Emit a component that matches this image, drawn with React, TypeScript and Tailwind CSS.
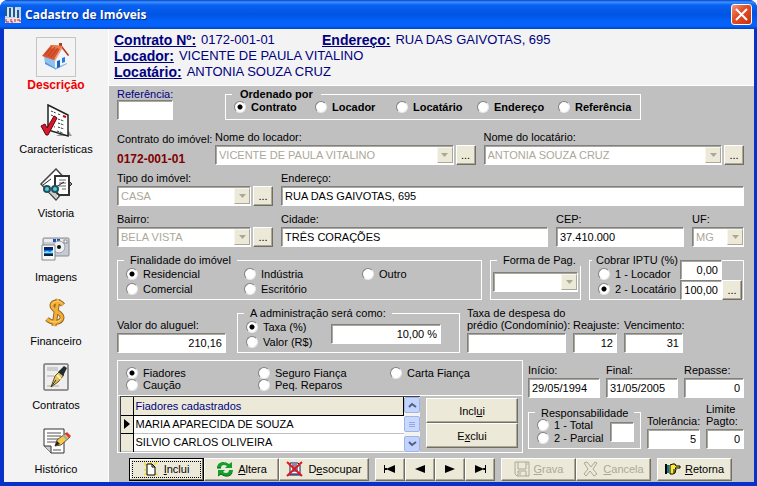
import React from "react";

const inputClass =
  "block h-5 w-full min-w-0 border border-t-[#808080] border-l-[#808080] border-r-white border-b-white bg-white px-[3px] text-black shadow-[inset_1px_1px_#aaa89c] outline-none";
const raised =
  "border border-t-white border-l-white border-r-[#716f64] border-b-[#716f64] bg-[#ece9d8] shadow-[inset_-1px_-1px_#aca899]";

type FieldProps = {
  id: string;
  label: React.ReactNode;
  value?: string;
  className?: string;
  labelClass?: string;
  right?: boolean;
};

function Field({ id, label, value = "", className = "", labelClass = "", right }: FieldProps) {
  return (
    <div className={`flex flex-col justify-end gap-0.5 ${className}`}>
      <label htmlFor={id} className={`whitespace-nowrap ${labelClass}`}>
        {label}
      </label>
      <input id={id} defaultValue={value} className={`${inputClass} ${right ? "text-right" : ""}`} />
    </div>
  );
}

function Combo({ id, value, label }: { id: string; value: string; label?: string }) {
  return (
    <div className="flex h-5 min-w-0 flex-1 border border-t-[#808080] border-l-[#808080] border-r-white border-b-white bg-white shadow-[inset_1px_1px_#aaa89c]">
      <select
        id={id}
        disabled
        aria-label={label}
        className="min-w-0 flex-1 appearance-none bg-transparent px-[3px] text-[#aca899] opacity-100 outline-none"
      >
        <option>{value}</option>
      </select>
      <span className="my-px flex w-4 shrink-0 items-center justify-center border border-t-[#f8f6ec] border-l-[#f8f6ec] border-r-[#aca899] border-b-[#aca899] bg-[#ece9d8]">
        <svg width="7" height="4" viewBox="0 0 7 4" fill="#aca899">
          <path d="M0 0h7L3.500 4z" />
        </svg>
      </span>
    </div>
  );
}

function MoreButton({ label }: { label: string }) {
  return (
    <button aria-label={label} className={`h-5 w-5 shrink-0 ${raised}`}>
      ...
    </button>
  );
}

type ComboFieldProps = { id: string; label: string; value: string; className?: string; more?: boolean };

function ComboField({ id, label, value, className = "", more = true }: ComboFieldProps) {
  return (
    <div className={`flex flex-col gap-0.5 ${className}`}>
      <label htmlFor={id}>{label}</label>
      <div className="flex gap-0.5">
        <Combo id={id} value={value} />
        {more && <MoreButton label={`Procurar ${label}`} />}
      </div>
    </div>
  );
}

function Radio({ name, label, checked }: { name: string; label: string; checked?: boolean }) {
  return (
    <label className="flex items-center gap-[5px] whitespace-nowrap">
      <input
        type="radio"
        name={name}
        defaultChecked={checked}
        className="h-3 w-3 shrink-0 appearance-none rounded-full border border-t-[#808080] border-l-[#808080] border-r-[#e8e8e8] border-b-[#e8e8e8] bg-white checked:bg-[radial-gradient(circle,#000_2px,#fff_3px)]"
      />
      {label}
    </label>
  );
}

type GroupProps = { legend: string; className?: string; legendClass?: string; children: React.ReactNode };

function Group({ legend, className = "", legendClass = "ml-1.5 px-1.5", children }: GroupProps) {
  return (
    <fieldset className={`min-w-0 border border-white ${className}`}>
      <legend className={`whitespace-nowrap ${legendClass}`}>{legend}</legend>
      {children}
    </fieldset>
  );
}

function HouseIcon() {
  return (
    <svg width="28" height="28" viewBox="0 0 28 28">
      <path d="M2 14l4-3 8 5v10L3 20z" fill="#8fc0ee" />
      <path d="M3 19l10 6v1L3 21z" fill="#4f93d8" />
      <path d="M13 15l7-10 5 7v9l-12 5z" fill="#eef6fd" />
      <path d="M13 25l12-5v1l-12 6z" fill="#86b6e4" />
      <path d="M15 18l3-1v7l-3 1z" fill="#1b63b8" />
      <path d="M20 15l3-1v5l-3 1z" fill="#2a7cd4" />
      <path d="M17 0h3v5h-3z" fill="#b8381a" />
      <path d="M0 13L9 2l11 1-8 14z" fill="#d9532c" />
      <path d="M9 2l11 1-2 3L7 5z" fill="#e97a4e" />
      <path d="M3 12l7-9M6 13l7-9M9 14l7-9" stroke="#bd3e1c" />
      <path d="M12 17l8-14 7 9-1 1-6-7-7 12z" fill="#f09a78" />
      <path d="M20 3l7 9-1 1-6-8z" fill="#b63314" />
    </svg>
  );
}

function CheckIcon() {
  return (
    <svg width="34" height="34" viewBox="0 0 34 34">
      <path d="M17 32l16 0-4-6z" fill="#999" />
      <path d="M9 1l20 10v21L9 26z" fill="#fff" stroke="#222" strokeWidth="1.500" />
      <path d="M12 7l5 2M12 11l5 2M19 10l3 1M19 15l6 2M19 19l6 2M19 23l6 2M12 22l4 1M18 27l6 2" stroke="#333" strokeDasharray="2 1" />
      <path d="M24 12l3 1" stroke="#c00" strokeWidth="2" />
      <path d="M2 22l4-2 2 4 7-12 3 2-9 17H7z" fill="#d51a2c" stroke="#650010" />
    </svg>
  );
}

function VistoriaIcon() {
  return (
    <svg width="34" height="34" viewBox="0 0 34 34">
      <path d="M17 1L2 16l15 16 14-16z" fill="#fff" stroke="#444" strokeWidth="1.500" />
      <path d="M4 19h14v12z" fill="#ccc" />
      <path d="M16 8h14v19H20l-4-4z" fill="#fff" stroke="#333" strokeWidth="2" />
      <path d="M20 12h7M20 15h7M20 18h7M23 21h4" stroke="#666" />
      <path d="M4 17l8-6M17 19l8-5" stroke="#222" fill="none" />
      <circle cx="8" cy="21" r="3" fill="#54cddd" stroke="#24515b" strokeWidth="2" />
      <circle cx="16" cy="21" r="3" fill="#54cddd" stroke="#24515b" strokeWidth="2" />
      <path d="M31 14l2 2-2 2" fill="none" stroke="#333" />
    </svg>
  );
}

function CameraIcon() {
  return (
    <svg width="32" height="32" viewBox="0 0 32 32">
      <rect x="3" y="5" width="26" height="18" rx="1" fill="#c8ccd2" stroke="#878c94" />
      <path d="M4 6h24v3H4z" fill="#e8ebef" />
      <path d="M13 6h3v3h-3zM17 6h3v3h-3z" fill="#264e9d" />
      <circle cx="19" cy="14" r="6" fill="#edf0f2" stroke="#999fa7" />
      <circle cx="19" cy="14" r="2" fill="#111" />
      <rect x="24" y="7" width="3" height="3" fill="#fff" stroke="#888" />
      <path d="M2 12h13v15H2z" fill="#f8f8f8" stroke="#888" />
      <path d="M4 14h9v9H4z" fill="#0870d8" />
      <path d="M4 14h9v3H4z" fill="#05246d" />
      <path d="M4 19l3-1 3 1 3-2v3H4z" fill="#8ce0ff" />
      <path d="M4 21h9v2H4z" fill="#102035" />
    </svg>
  );
}

function DollarIcon() {
  return (
    <svg width="32" height="34" viewBox="0 0 32 34" fill="none" strokeLinejoin="round">
      <path d="M23 9c-3-4-10-4-11 0-1 6 11 7 10 13-1 5-10 6-15 1M18 3l-4 27" stroke="#8e6827" strokeWidth="5" />
      <path d="M23 9c-3-4-10-4-11 0-1 6 11 7 10 13-1 5-10 6-15 1M18 3l-4 27" stroke="#f6ae35" strokeWidth="3" />
      <path d="M22 7c-3-3-9-2-10 2M10 25c4 2 9 1 11-2" stroke="#ffd37a" />
    </svg>
  );
}

function ContractIcon() {
  return (
    <svg width="32" height="32" viewBox="0 0 32 32">
      <rect x="4" y="3" width="24" height="26" rx="1" fill="#eee" stroke="#777" strokeWidth="1.500" />
      <path d="M7 7h11M7 9h11M7 15h7M7 25h12" stroke="#aaa" />
      <path d="M11 26l4-11 5-5 4 4-6 7z" fill="#e4c262" stroke="#665220" />
      <path d="M18 11l6-6 3 2-4 8z" fill="#202b34" />
      <path d="M11 26l5-7" stroke="#332" />
      <path d="M17 14l4 4" stroke="#fff2ad" strokeWidth="2" />
    </svg>
  );
}

function HistoryIcon() {
  return (
    <svg width="32" height="32" viewBox="0 0 32 32">
      <path d="M4 4h20v24H11l-7-7z" fill="#fff" stroke="#333" />
      <path d="M4 21h7v7" fill="#ccc" stroke="#333" />
      <path d="M7 8h14M7 11h14M7 14h12M7 17h10M13 25h8" stroke="#555" />
      <path d="M15 21l2-6 9-7 4 4-9 8z" fill="#f6c951" stroke="#655229" />
      <path d="M25 9l2-2 4 4-2 2z" fill="#df3c2d" />
      <path d="M23 10l4 4" stroke="#8db4ba" strokeWidth="2" />
      <path d="M15 21l2-5 3 3z" fill="#222" />
    </svg>
  );
}

const menu = [
  { label: "Descrição", icon: <HouseIcon /> },
  { label: "Características", icon: <CheckIcon /> },
  { label: "Vistoria", icon: <VistoriaIcon /> },
  { label: "Imagens", icon: <CameraIcon /> },
  { label: "Financeiro", icon: <DollarIcon /> },
  { label: "Contratos", icon: <ContractIcon /> },
  { label: "Histórico", icon: <HistoryIcon /> },
];

function NavIcon({ d }: { d: string }) {
  return (
    <svg width="14" height="10" viewBox="0 0 14 10">
      <path d={d} />
    </svg>
  );
}

const navButtons = [
  { label: "Primeiro", d: "M1 1h1v8H1zM12 1v8L3 5zM2 4h2v2H2z" },
  { label: "Anterior", d: "M12 1v8L2 5z" },
  { label: "Próximo", d: "M2 1v8l10-4z" },
  { label: "Último", d: "M12 1h1v8h-1zM2 1v8l9-4zM10 4h2v2h-2z" },
];

function ToolButton({ className = "", children, ...rest }: React.ComponentProps<"button">) {
  return (
    <button
      className={`flex h-[23px] items-center justify-center gap-1 whitespace-nowrap ${raised} ${className}`}
      {...rest}
    >
      {children}
    </button>
  );
}

function TitleBar() {
  return (
    <header className="flex h-[29px] items-center gap-1 bg-[linear-gradient(#0a3fc9,#3a93ff_2px,#0a62f0_5px,#0054e3_14px,#0462fa_22px,#0563fb_26px,#0440c0)] pr-[5px] pl-[5px]">
      <svg width="16" height="16" viewBox="0 0 16 16">
        <path d="M0 0h16v12H0z" fill="#b7d2ec" />
        <path d="M1 0v9M5 1v9M9 0v10M13 3v8" stroke="#24598d" strokeWidth="2" />
        <path d="M3 0v10M7 1v9M11 1v10" stroke="#eef5fb" />
        <path d="M0 11h16v5H0z" fill="#f4dede" />
        <path d="M1 12v3h3M6 12v3h2M10 12v3M12 13h3v2" stroke="#b92030" fill="none" />
      </svg>
      <h1 className="flex-1 font-['Open_Sans',sans-serif] text-xs leading-4 font-bold text-white [text-shadow:1px_1px_#0c2d83]">
        Cadastro de Imóveis
      </h1>
      <button
        aria-label="Fechar"
        className="flex h-[21px] w-[21px] items-center justify-center rounded-[3px] border border-white bg-[linear-gradient(135deg,#ed9a80,#e2502b_40%,#c8330c)]"
      >
        <svg width="13" height="13" viewBox="0 0 13 13" stroke="#fff" strokeWidth="2">
          <path d="M1 1l11 11M12 1L1 12" />
        </svg>
      </button>
    </header>
  );
}

function Sidebar() {
  return (
    <nav className="flex w-[104px] shrink-0 flex-col gap-2 bg-[#f3f3f3] pt-2">
      {menu.map((item, i) => (
        <a key={item.label} href="#" className="flex flex-col items-center">
          <span
            className={`flex h-10 w-10 items-center justify-center ${i === 0 ? "border border-[#c4c4c4]" : ""}`}
          >
            {item.icon}
          </span>
          <span className={`leading-4 ${i === 0 ? "text-xs leading-4 font-bold text-[#f00000]" : ""}`}>
            {item.label}
          </span>
        </a>
      ))}
    </nav>
  );
}

function SummaryItem({ label, value }: { label: string; value: string }) {
  return (
    <p className="flex gap-[5px]">
      <b className="text-sm leading-4 underline">{label}</b>
      <span>{value}</span>
    </p>
  );
}

function Summary() {
  return (
    <div className="border-b border-white bg-[#f3f3f3] pt-[3px] pb-[5px] pl-[5px] text-[13px] leading-4 text-[#000080]">
      <div className="grid grid-cols-[208px_1fr]">
        <SummaryItem label="Contrato Nº:" value="0172-001-01" />
        <SummaryItem label="Endereço:" value="RUA DAS GAIVOTAS, 695" />
      </div>
      <SummaryItem label="Locador:" value="VICENTE DE PAULA VITALINO" />
      <SummaryItem label="Locatário:" value="ANTONIA SOUZA CRUZ" />
    </div>
  );
}

function ScrollButton({ d, label }: { d: string; label: string }) {
  return (
    <button
      aria-label={label}
      className="flex h-4 w-4 items-center justify-center rounded-xs border border-[#9db5ea] bg-[#c3d3fd]"
    >
      <svg width="9" height="6" viewBox="0 0 9 6" fill="none" stroke="#4d6185" strokeWidth="2">
        <path d={d} />
      </svg>
    </button>
  );
}

function Fiadores() {
  return (
    <section className="flex min-w-0 flex-1 flex-col border border-white">
      <div className="grid h-[35px] grid-cols-[132px_132px_1fr] grid-rows-[12px_12px] content-center border-b border-white pt-0.5 pl-2">
        <Radio name="garantia" label="Fiadores" checked />
        <Radio name="garantia" label="Seguro Fiança" />
        <Radio name="garantia" label="Carta Fiança" />
        <Radio name="garantia" label="Caução" />
        <Radio name="garantia" label="Peq. Reparos" />
      </div>
      <div className="flex flex-1 gap-1.5 pr-1 pl-0.5">
        <div className="flex flex-1 border-t border-l border-[#404040] bg-white">
          <table className="h-[54px] flex-1 border-collapse text-left">
            <thead>
              <tr className="h-[18px] border-b border-black bg-[#ece9d8] text-[#000080]">
                <th className="w-3 border-r border-black" aria-label="Atual" />
                <th className="border-r border-black px-0.5 font-normal">Fiadores cadastrados</th>
              </tr>
            </thead>
            <tbody>
              <tr className="h-[18px] border-b border-[#c0c0c0]">
                <td className="border-r border-b border-black bg-[#ece9d8]">
                  <svg className="mx-auto" width="6" height="10" viewBox="0 0 6 10">
                    <path d="M0 0v10l6-5z" />
                  </svg>
                </td>
                <td className="px-0.5">MARIA APARECIDA DE SOUZA</td>
              </tr>
              <tr className="h-[18px] border-b border-[#c0c0c0]">
                <td className="border-r border-black bg-[#ece9d8]" />
                <td className="px-0.5">SILVIO CARLOS OLIVEIRA</td>
              </tr>
            </tbody>
          </table>
          <div className="flex flex-col justify-between bg-[#f4f3ee]">
            <ScrollButton label="Subir" d="M1 5l3-3 4 3" />
            <span className="flex h-4 w-4 flex-col items-center justify-center gap-px rounded-xs border border-[#9db5ea] bg-[#c9d8fc]">
              <i className="h-px w-1.5 bg-[#8caaf0]" />
              <i className="h-px w-1.5 bg-[#8caaf0]" />
              <i className="h-px w-1.5 bg-[#8caaf0]" />
            </span>
            <ScrollButton label="Descer" d="M1 1l3 3 4-3" />
          </div>
        </div>
        <div className="flex w-[92px] flex-col py-0.5">
          <button className={`h-[25px] ${raised}`}>
            Incl<u>u</u>i
          </button>
          <button className={`h-[25px] ${raised}`}>
            E<u>x</u>clui
          </button>
        </div>
      </div>
    </section>
  );
}

function Toolbar() {
  return (
    <div className="flex pl-3">
      <div className="flex">
        <button className="flex h-[23px] w-[75px] border border-black bg-[#ece9d8] p-0.5 shadow-[inset_-1px_-1px_#716f64,inset_1px_1px_#fff]">
          <span className="flex h-full w-full items-center justify-center gap-1.5 border border-dotted border-black">
            <svg width="14" height="14" viewBox="0 0 14 14">
              <path d="M0 1l3 3M7 0v2M13 0l-3 3M0 8h2M0 13l3-2M14 13l-3-2" stroke="#f2e43b" strokeWidth="2" />
              <path d="M3 2h5l3 3v8H3z" fill="#fff" stroke="#000" />
              <path d="M8 2v3h3" fill="none" stroke="#000" />
            </svg>
            <span>
              <u>I</u>nclui
            </span>
          </span>
        </button>
        <ToolButton className="w-[75px]">
          <svg width="18" height="16" viewBox="0 0 18 16" fill="#12a02c">
            <path d="M1 7C1 1 8-1 13 3l3-2v6H9l2-2C8 3 5 4 5 7z" />
            <path d="M17 9c0 6-7 8-12 4l-3 2V9h7l-2 2c3 2 6 1 6-2z" />
            <path d="M1 7h4M2 15l3-2c4 3 9 3 11-1" stroke="#075e16" fill="none" />
          </svg>
          <span>
            <u>A</u>ltera
          </span>
        </ToolButton>
        <ToolButton className="w-[90px]">
          <svg width="18" height="16" viewBox="0 0 18 16">
            <path d="M4 2h8l2 2v9H4z" fill="#fff" stroke="#101060" />
            <path d="M6 4h5M6 6h6M6 8h6M6 10h6M2 14h13" stroke="#101060" />
            <path d="M1 1l15 14M16 1L1 15" stroke="#e01818" strokeWidth="2" />
          </svg>
          <span>
            D<u>e</u>socupar
          </span>
        </ToolButton>
      </div>
      <div className="ml-1.5 flex">
        {navButtons.map((b) => (
          <ToolButton key={b.label} aria-label={b.label} className="w-[30px]">
            <NavIcon d={b.d} />
          </ToolButton>
        ))}
      </div>
      <div className="ml-1.5 flex text-[#aca899] [text-shadow:1px_1px_#fff]">
        <ToolButton disabled className="w-[75px]">
          <svg width="16" height="16" viewBox="0 0 16 16" fill="none" stroke="#aca899">
            <path d="M1 1h14v14H3l-2-2zM4 1v7h8V1M4 15v-5h8v5M6 11v3M13 3h1" />
          </svg>
          <span>
            <u>G</u>rava
          </span>
        </ToolButton>
        <ToolButton disabled className="w-[75px]">
          <svg width="16" height="16" viewBox="0 0 16 16" fill="none" stroke="#aca899">
            <path d="M1 2l3-1 4 5 4-5 2 1-4 6 4 5-3 2-4-5-4 5-2-2 4-5z" />
          </svg>
          <span>
            <u>C</u>ancela
          </span>
        </ToolButton>
      </div>
      <ToolButton className="ml-1.5 w-[75px]">
        <svg width="16" height="12" viewBox="0 0 16 12">
          <path d="M0 1h2v10H0z" />
          <path d="M2 2h2v8H2z" fill="#008080" />
          <path d="M5 2l3-1h2l1 2h4v2h-5l1 1-1 4-2 1H5z" fill="#ffe83a" stroke="#000" />
          <path d="M8 7h2M8 9h2" stroke="#000" />
        </svg>
        <span>
          <u>R</u>etorna
        </span>
      </ToolButton>
    </div>
  );
}

export default function App() {
  return (
    <div className="flex min-h-screen flex-col overflow-hidden rounded-t-lg bg-[#0831d9] font-['Liberation_Sans',Arial,sans-serif] text-[11px] leading-3 text-black">
      <TitleBar />
      <div className="flex flex-1 border-r-3 border-b-4 border-l-4 border-[#0831c9]">
        <Sidebar />
        <div className="flex min-w-0 flex-1 flex-col border-l border-white bg-[#c0c0c0]">
          <Summary />
          <main className="flex flex-col gap-[7px] pt-0.5 pr-2.5 pl-2">
            <div className="mb-1 flex gap-[52px]">
              <Field id="referencia" label="Referência:" className="w-14 gap-0!" labelClass="text-[#000080]" />
              <Group legend="Ordenado por" className="font-bold" legendClass="ml-1.5 px-2">
                <div className="grid grid-cols-[81px_81px_81px_81px_82px] pt-px pl-2">
                  <Radio name="ordem" label="Contrato" checked />
                  <Radio name="ordem" label="Locador" />
                  <Radio name="ordem" label="Locatário" />
                  <Radio name="ordem" label="Endereço" />
                  <Radio name="ordem" label="Referência" />
                </div>
              </Group>
            </div>

            <div className="flex gap-2">
              <dl className="flex w-[90px] shrink-0 flex-col justify-end gap-2 whitespace-nowrap">
                <dt>Contrato do imóvel:</dt>
                <dd className="text-xs leading-3 font-bold text-[#800000]">0172-001-01</dd>
              </dl>
              <ComboField id="locador" label="Nome do locador:" value="VICENTE DE PAULA VITALINO" className="flex-1" />
              <ComboField id="locatario" label="Nome do locatário:" value="ANTONIA SOUZA CRUZ" className="flex-1" />
            </div>

            <div className="flex gap-2">
              <ComboField id="tipo" label="Tipo do imóvel:" value="CASA" className="w-[156px]" />
              <Field id="endereco" label="Endereço:" value="RUA DAS GAIVOTAS, 695" className="flex-1" />
            </div>

            <div className="flex gap-2">
              <ComboField id="bairro" label="Bairro:" value="BELA VISTA" className="w-[156px]" />
              <Field id="cidade" label="Cidade:" value="TRÊS CORAÇÕES" className="flex-1" />
              <Field id="cep" label="CEP:" value="37.410.000" className="w-32" />
              <ComboField id="uf" label="UF:" value="MG" className="w-[52px]" more={false} />
            </div>

            <div className="flex h-[46px] gap-2">
              <Group legend="Finalidade do imóvel" className="flex-1">
                <div className="grid grid-cols-[118px_118px_1fr] grid-rows-[15px_15px] pl-2">
                  <Radio name="finalidade" label="Residencial" checked />
                  <Radio name="finalidade" label="Indústria" />
                  <Radio name="finalidade" label="Outro" />
                  <Radio name="finalidade" label="Comercial" />
                  <Radio name="finalidade" label="Escritório" />
                </div>
              </Group>
              <Group legend="Forma de Pag." className="w-[91px]">
                <div className="flex px-0.5 pt-1.5">
                  <Combo id="forma" value="" label="Forma de Pag." />
                </div>
              </Group>
              <div className="relative w-[155px]">
                <Group legend="Cobrar IPTU (%)" className="h-full" legendClass="ml-0.5 px-1">
                  <div className="grid grid-rows-[15px_15px] pl-2">
                    <Radio name="iptu" label="1 - Locador" />
                    <Radio name="iptu" label="2 - Locatário" checked />
                  </div>
                </Group>
                <div className="absolute top-1.5 right-0.5 grid grid-cols-[42px_20px]">
                  <input aria-label="Locador %" defaultValue="0,00" className={`${inputClass} text-right`} />
                  <span />
                  <input aria-label="Locatário %" defaultValue="100,00" className={`${inputClass} text-right`} />
                  <MoreButton label="Procurar IPTU" />
                </div>
              </div>
            </div>

            <div className="flex h-[46px] gap-[7px]">
              <Field id="aluguel" label="Valor do aluguel:" value="210,16" className="w-[109px]" right />
              <Group legend="A administração será como:" className="ml-1 w-[223px]">
                <div className="flex items-center justify-between pr-[18px] pl-2">
                  <div className="grid grid-rows-[15px_15px]">
                    <Radio name="taxa" label="Taxa (%)" checked />
                    <Radio name="taxa" label="Valor (R$)" />
                  </div>
                  <div className="w-[110px]">
                    <input aria-label="Taxa" defaultValue="10,00 %" className={`${inputClass} text-right`} />
                  </div>
                </div>
              </Group>
              <Field
                id="despesa"
                label={
                  <>
                    Taxa de despesa do
                    <br />
                    prédio (Condomínio):
                  </>
                }
                className="w-[99px]"
              />
              <Field id="reajuste" label="Reajuste:" value="12" className="w-11" right />
              <Field id="vencimento" label="Vencimento:" value="31" className="w-[59px]" right />
            </div>

            <div className="flex flex-col gap-[5px]">
              <div className="flex gap-[5px]">
                <Fiadores />
                <div className="flex w-[216px] shrink-0 flex-col justify-between pt-1 pb-1">
                  <div className="flex gap-1.5">
                    <Field id="inicio" label="Início:" value="29/05/1994" className="flex-1" />
                    <Field id="final" label="Final:" value="31/05/2005" className="flex-1" />
                    <Field id="repasse" label="Repasse:" value="0" className="w-[60px]" right />
                  </div>
                  <div className="flex gap-1.5">
                    <Group legend="Responsabilidade" className="h-[42px] w-[113px] self-end">
                      <div className="flex items-center justify-between pr-1.5 pl-2">
                        <div className="grid grid-rows-[13px_13px]">
                          <Radio name="resp" label="1 - Total" />
                          <Radio name="resp" label="2 - Parcial" />
                        </div>
                        <div className="w-6">
                          <input aria-label="Responsabilidade" className={inputClass} />
                        </div>
                      </div>
                    </Group>
                    <Field id="tolerancia" label="Tolerância:" value="5" className="w-[53px]" right />
                    <Field
                      id="limite"
                      label={
                        <>
                          Limite
                          <br />
                          Pagto:
                        </>
                      }
                      value="0"
                      className="flex-1"
                      right
                    />
                  </div>
                </div>
              </div>
              <Toolbar />
            </div>
          </main>
        </div>
      </div>
    </div>
  );
}
